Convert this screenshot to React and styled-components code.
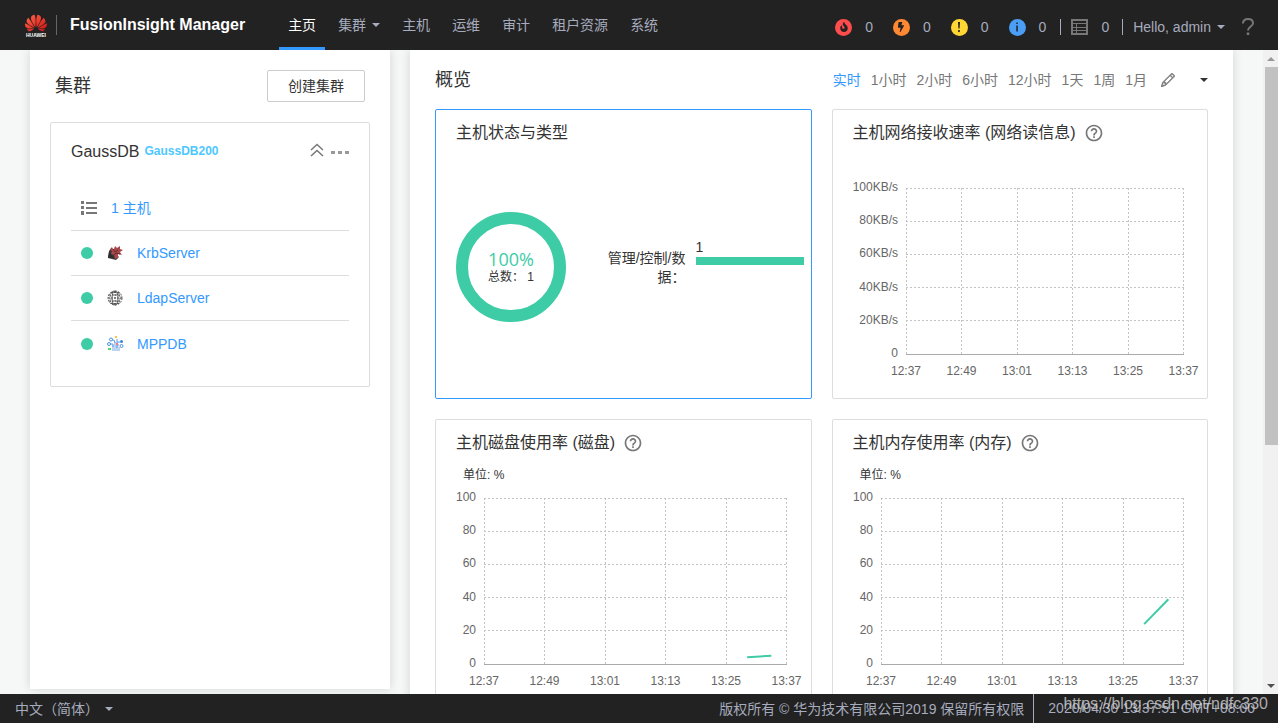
import React from 'react';
import styled, { createGlobalStyle } from 'styled-components';
import { SiHuawei } from 'react-icons/si';
import { FaFire, FaBolt } from 'react-icons/fa';
import { MdHelpOutline } from 'react-icons/md';
import { BsPencil } from 'react-icons/bs';

const GREEN = '#3dcca6';
const BLUE = '#3399ff';

const ExclamationIcon = ({ size }) => (
  <svg width={size} height={size} viewBox='0 0 10 10' fill='currentColor'>
    <path d='M4 0h2L5.600 6.500H4.400zM4.200 8h1.600v2H4.200z' />
  </svg>
);

const InfoIcon = ({ size }) => (
  <svg width={size} height={size} viewBox='0 0 10 10' fill='currentColor'>
    <path d='M4.300 0.500h1.500v1.500H4.300zM4.300 3.500h1.500v6H4.300z' />
  </svg>
);

const navItems = [
  { label: '主页', active: true },
  { label: '集群', menu: true },
  { label: '主机' },
  { label: '运维' },
  { label: '审计' },
  { label: '租户资源' },
  { label: '系统' },
];

const alarms = [
  { name: '紧急', color: '#ff4c4c', Icon: FaFire, count: 0 },
  { name: '重要', color: '#ff8833', Icon: FaBolt, count: 0 },
  { name: '次要', color: '#ffd633', Icon: ExclamationIcon, count: 0 },
  { name: '提示', color: '#4a9ef5', Icon: InfoIcon, count: 0 },
];

const ranges = ['实时', '1小时', '2小时', '6小时', '12小时', '1天', '1周', '1月'];
const times = ['12:37', '12:49', '13:01', '13:13', '13:25', '13:37'];
const PLOT_HEIGHT = 166;

const KrbIcon = () => (
  <svg width='16' height='16' viewBox='0 0 16 16'>
    <path d='M2 6L5 2l1 4 6 6-3 3-8-2z' fill='#3a3638' />
    <path
      d='M4 3l3 1 1-3 2 2 3-2v3l3 1-3 2 2 3-4-1v4l-3 1-1-4-3-1 1-3-2-1z'
      fill='#a8474a'
    />
    <path d='M6 4l2 3 3-2M7 10l2-2 4 1' stroke='#612c30' fill='none' />
    <path d='M1 13l1-6 5 6z' fill='#2d2d30' />
  </svg>
);

const LdapIcon = () => (
  <svg width='16' height='16' viewBox='0 0 16 16' fill='none' stroke='#555'>
    <circle cx='8' cy='8' r='7' strokeDasharray='2 1' />
    <ellipse cx='8' cy='8' rx='3' ry='7' />
    <path d='M8 1v14M1 8h14M2 5h12M2 11h12M4 2.5h8M4 13.5h8' strokeDasharray='2 1' />
    <path d='M5 2Q1 8 5 14M11 2q4 6 0 12' strokeDasharray='2 1' />
  </svg>
);

const MppdbIcon = () => (
  <svg width='17' height='16' viewBox='0 0 17 16' fill='none'>
    <path d='M6 15V9M8 15V6M10 15V9M12 15v-4' stroke='#a9c4ee' strokeWidth='1.5' />
    <path
      d='M3 8h3v3M5 4h2l1 3M10 7V3M10 6h3M12 9h-2v3'
      stroke='#5b9be8'
    />
    <circle cx='2' cy='8' r='1.5' stroke='#4a90e2' />
    <circle cx='4' cy='3.5' r='1.5' stroke='#4a90e2' />
    <circle cx='14.5' cy='5.5' r='1.5' fill='#3c82dc' />
    <circle cx='14.5' cy='10' r='1.5' stroke='#4a90e2' />
    <path d='M8 0h2v2H8z' fill='#f6c342' />
    <path d='M9 7h2v2H9z' fill='#f08080' />
    <path d='M1 12h3v2H1z' fill='#4cd964' />
  </svg>
);

const services = [
  { name: 'KrbServer', Icon: KrbIcon },
  { name: 'LdapServer', Icon: LdapIcon },
  { name: 'MPPDB', Icon: MppdbIcon },
];

const Logo = () => (
  <LogoMark>
    <svg width='22' height='18' viewBox='0 0 22 18'>
      <linearGradient id='petal' x1='0' y1='0' x2='1' y2='1'>
        <stop offset='0' stopColor='#ff6a50' />
        <stop offset='0.5' stopColor='#ee3a2c' />
        <stop offset='1' stopColor='#c4121a' />
      </linearGradient>
      <SiHuawei y='-2' size={22} fill='url(#petal)' />
    </svg>
    <svg width='22' height='5' viewBox='0 0 22 5'>
      <text x='11' y='5' textAnchor='middle' fontSize='5' fontWeight='700' fill='#fff'>
        HUAWEI
      </text>
    </svg>
  </LogoMark>
);

const Chart = ({ unit = '', gutter, series = [] }) => {
  const toY = (value) => PLOT_HEIGHT - (value / 100) * PLOT_HEIGHT;

  return (
    <PlotArea $gutter={gutter}>
      <Plot role='img' aria-label='趋势图'>
        {[0, 20, 40, 60, 80, 100].map((value) => (
          <g key={value}>
            <GridLine x1='0' x2='100%' y1={toY(value)} y2={toY(value)} />
            <text x='-8' y={toY(value) + 3} textAnchor='end'>
              {value === 0 ? value : `${value}${unit}`}
            </text>
          </g>
        ))}
        {times.map((time, i) => (
          <g key={time}>
            <GridLine x1={`${i * 20}%`} x2={`${i * 20}%`} y1='0' y2={PLOT_HEIGHT} />
            <text x={`${i * 20}%`} y={PLOT_HEIGHT + 21} textAnchor='middle'>
              {time}
            </text>
          </g>
        ))}
        <AxisLine x1='0' x2='100%' y1={PLOT_HEIGHT} y2={PLOT_HEIGHT} />
        {series.slice(1).map((point, i) => (
          <SeriesLine
            key={point.at}
            x1={`${series[i].at}%`}
            y1={toY(series[i].value)}
            x2={`${point.at}%`}
            y2={toY(point.value)}
          />
        ))}
      </Plot>
    </PlotArea>
  );
};

const ChartCard = ({ title, unitLabel, ...chart }) => (
  <Card>
    <CardTitle>
      {title}
      <IconButton type='button' aria-label='帮助'>
        <MdHelpOutline size={20} />
      </IconButton>
    </CardTitle>
    <UnitLabel>{unitLabel}</UnitLabel>
    <Chart {...chart} />
  </Card>
);

const HostCard = () => (
  <Card $selected>
    <CardTitle>主机状态与类型</CardTitle>
    <HostBody>
      <Donut>
        <DonutValue>100%</DonutValue>
        <DonutTotal>总数： 1</DonutTotal>
      </Donut>
      <BarGroup>
        <BarLabel>管理/控制/数据：</BarLabel>
        <BarValue>
          <span>1</span>
          <Bar />
        </BarValue>
      </BarGroup>
    </HostBody>
  </Card>
);

const App = () => (
  <>
    <GlobalStyle />
    <Page>
      <Header>
        <Logo />
        <Brand>FusionInsight Manager</Brand>
        <Nav>
          {navItems.map((item) => (
            <NavLink key={item.label} href='#' $active={item.active}>
              {item.label}
              {item.menu && <Caret />}
            </NavLink>
          ))}
        </Nav>
        <Status>
          <Alarms>
            {alarms.map(({ name, color, Icon, count }) => (
              <Counter key={name} href='#' aria-label={name}>
                <AlarmDot $color={color}>
                  <Icon size={10} />
                </AlarmDot>
                {count}
              </Counter>
            ))}
          </Alarms>
          <Divided>
            <Counter href='#'>
              <svg width='17' height='16' viewBox='0 0 17 16' fill='none' stroke='#777'>
                <path d='M1 1h15v14H1z' strokeWidth='2' />
                <path d='M5.5 4v11M1 4.5h15M1 8.5h15M1 11.5h15' />
              </svg>
              0
            </Counter>
          </Divided>
          <Divided>
            <UserButton type='button'>
              Hello, admin
              <Caret />
            </UserButton>
          </Divided>
          <HelpButton type='button' aria-label='帮助'>
            <svg width='12' height='18' viewBox='0 0 12 18' fill='none' stroke='#777'>
              <path
                d='M1 5.5C1 2.5 3 1 6 1s5 1.500 5 4.200C11 8.500 6 8.500 6 12.500'
                strokeWidth='2'
              />
              <path d='M6 14.500v2.500' strokeWidth='2.500' />
            </svg>
          </HelpButton>
        </Status>
      </Header>

      <Main>
        <Content>
          <SidePanel>
            <SideHeader>
              <Heading>集群</Heading>
              <CreateButton type='button'>创建集群</CreateButton>
            </SideHeader>
            <ClusterCard>
              <ClusterHeader>
                <ClusterName>GaussDB</ClusterName>
                <ClusterTag>GaussDB200</ClusterTag>
                <ClusterActions>
                  <IconButton type='button' aria-label='收起'>
                    <svg width='14' height='14' viewBox='0 0 14 14' fill='none' stroke='#777' strokeWidth='1.5'>
                      <path d='M1 7l6-5.500L13 7M1 13l6-5.500 6 5.500' />
                    </svg>
                  </IconButton>
                  <IconButton type='button' aria-label='更多'>
                    <svg width='18' height='14' viewBox='0 0 18 14' fill='#999'>
                      <path d='M0 8h4v3H0zM7 8h4v3H7zM14 8h4v3h-4z' />
                    </svg>
                  </IconButton>
                </ClusterActions>
              </ClusterHeader>
              <ServiceList>
                <HostRow>
                  <svg width='16' height='14' viewBox='0 0 16 14' fill='#777'>
                    <path d='M0 0h3v3H0zM0 5h3v3H0zM0 10h3v4H0zM5 1h11v2H5zM5 6h11v2H5zM5 11h11v2H5z' />
                  </svg>
                  <Link href='#'>1 主机</Link>
                </HostRow>
                {services.map(({ name, Icon }) => (
                  <ServiceRow key={name}>
                    <HealthDot />
                    <ServiceIcon>
                      <Icon />
                    </ServiceIcon>
                    <Link href='#'>{name}</Link>
                  </ServiceRow>
                ))}
              </ServiceList>
            </ClusterCard>
          </SidePanel>

          <OverviewPanel>
            <OverviewHeader>
              <Heading>概览</Heading>
              <Ranges>
                {ranges.map((range, i) => (
                  <RangeButton key={range} type='button' $active={i === 0}>
                    {range}
                  </RangeButton>
                ))}
              </Ranges>
              <IconButton type='button' aria-label='编辑'>
                <BsPencil size={14} strokeWidth={0.7} />
              </IconButton>
              <MenuButton type='button' aria-label='更多'>
                <Caret />
              </MenuButton>
            </OverviewHeader>
            <CardGrid>
              <HostCard />
              <ChartCard title='主机网络接收速率 (网络读信息)' unit='KB/s' gutter={53} />
              <ChartCard
                title='主机磁盘使用率 (磁盘)'
                unitLabel='单位: %'
                gutter={28}
                series={[
                  { at: 87, value: 4 },
                  { at: 95, value: 5 },
                ]}
              />
              <ChartCard
                title='主机内存使用率 (内存)'
                unitLabel='单位: %'
                gutter={28}
                series={[
                  { at: 87, value: 24 },
                  { at: 95, value: 39 },
                ]}
              />
            </CardGrid>
          </OverviewPanel>
        </Content>
        <ScrollTrack aria-hidden='true'>
          <ScrollArrow $up />
          <ScrollLane>
            <ScrollThumb />
          </ScrollLane>
          <ScrollArrow />
        </ScrollTrack>
      </Main>

      <Footer>
        <LanguageButton type='button'>
          中文（简体）
          <Caret />
        </LanguageButton>
        <Copyright>版权所有 © 华为技术有限公司2019 保留所有权限</Copyright>
        <ServerTime>2020/04/30 13:37:51 GMT+08:00</ServerTime>
        <Watermark>https://blog.csdn.net/ndfc330</Watermark>
      </Footer>
    </Page>
  </>
);

const GlobalStyle = createGlobalStyle`
  * {
    box-sizing: border-box;
  }

  body {
    margin: 0;
    color: #333;
    font-family: 'Liberation Sans', 'Noto Sans CJK SC', sans-serif;
    font-size: 14px;
    line-height: 20px;
  }

  button {
    padding: 0;
    border: none;
    background: none;
    color: inherit;
    font: inherit;
    cursor: pointer;
  }

  a {
    color: inherit;
    text-decoration: none;
  }

  svg {
    display: block;
    flex-shrink: 0;
  }
`;

const Page = styled.div`
  display: flex;
  flex-direction: column;
  height: 100vh;
  background-color: #f6f8f8;
`;

const Header = styled.header`
  display: flex;
  align-items: center;
  flex-shrink: 0;
  height: 50px;
  padding: 0 24px;
  background-color: #222;
  color: #a6abbd;
  white-space: nowrap;
`;

const LogoMark = styled.div`
  display: flex;
  flex-direction: column;
  align-items: center;
  width: 24px;
`;

const Brand = styled.div`
  margin-left: 8px;
  padding-left: 13px;
  border-left: 1px solid #666;
  color: #fff;
  font-size: 16px;
  font-weight: 700;
`;

const Nav = styled.nav`
  display: flex;
  gap: 4px;
  margin-left: 34px;
`;

const NavLink = styled.a`
  display: flex;
  align-items: center;
  gap: 6px;
  height: 50px;
  padding: 3px 9px 0;
  border-bottom: 3px solid ${(props) => (props.$active ? BLUE : 'transparent')};
  color: ${(props) => (props.$active ? '#fff' : 'inherit')};
`;

const Caret = styled.span`
  width: 0;
  height: 0;
  border: 4px solid transparent;
  border-top-color: currentColor;
  border-bottom: none;
`;

const Status = styled.div`
  display: flex;
  align-items: center;
  margin-left: auto;
  padding-top: 4px;
`;

const Alarms = styled.div`
  display: flex;
  gap: 20px;
  padding-right: 14px;
`;

const Counter = styled.a`
  display: flex;
  align-items: center;
  gap: 13px;
`;

const AlarmDot = styled.span`
  display: flex;
  align-items: center;
  justify-content: center;
  width: 17px;
  height: 17px;
  border-radius: 50%;
  background-color: ${(props) => props.$color};
  color: #222;
`;

const Divided = styled.div`
  display: flex;
  align-items: center;
  height: 16px;
  padding: 0 13px 0 10px;
  border-left: 1px solid #a6abbd;
`;

const UserButton = styled.button`
  display: flex;
  align-items: center;
  gap: 6px;
`;

const HelpButton = styled.button`
  margin-left: 4px;
`;

const Main = styled.main`
  display: flex;
  flex: 1;
  min-height: 0;
`;

const Content = styled.div`
  display: flex;
  flex: 1;
  gap: 20px;
  min-width: 0;
  padding: 0 30px;
  overflow: hidden;
`;

const Panel = styled.section`
  background-color: #fff;
  box-shadow: 0 0 10px rgba(0, 0, 0, 0.15);
`;

const SidePanel = styled(Panel)`
  flex: 0 0 360px;
  margin-bottom: 5px;
  padding: 20px;
`;

const SideHeader = styled.div`
  display: flex;
  align-items: center;
  justify-content: space-between;
  padding: 0 5px;
`;

const Heading = styled.h2`
  margin: 0;
  font-size: 18px;
  font-weight: 400;
  line-height: 24px;
`;

const CreateButton = styled.button`
  height: 32px;
  padding: 0 20px;
  border: 1px solid #ccc;
  border-radius: 2px;
`;

const ClusterCard = styled.div`
  margin-top: 20px;
  padding: 18px 20px 20px;
  border: 1px solid #ddd;
  border-radius: 2px;
`;

const ClusterHeader = styled.div`
  display: flex;
  align-items: flex-start;
  height: 24px;
`;

const ClusterName = styled.span`
  font-size: 16px;
  line-height: 22px;
`;

const ClusterTag = styled.span`
  margin-left: 5px;
  color: #4cc8ff;
  font-size: 12px;
  font-weight: 700;
`;

const ClusterActions = styled.div`
  display: flex;
  gap: 7px;
  margin-left: auto;
  padding-top: 2px;
`;

const IconButton = styled.button`
  color: #777;
`;

const ServiceList = styled.ul`
  margin: 21px 0 0;
  padding: 0;
  list-style: none;
`;

const ServiceRow = styled.li`
  display: flex;
  align-items: center;
  height: 45px;
  padding-left: 10px;

  &:not(:last-child) {
    border-bottom: 1px solid #ddd;
  }
`;

const HostRow = styled(ServiceRow)`
  gap: 14px;
`;

const HealthDot = styled.span`
  width: 12px;
  height: 12px;
  border-radius: 50%;
  background-color: ${GREEN};
`;

const ServiceIcon = styled.span`
  width: 30px;
  margin-left: 14px;
`;

const Link = styled.a`
  color: ${BLUE};
`;

const OverviewPanel = styled(Panel)`
  flex: 1;
  align-self: flex-start;
  min-width: 0;
  padding: 0 25px 25px;
`;

const OverviewHeader = styled.div`
  display: flex;
  align-items: center;
  height: 59px;
`;

const Ranges = styled.div`
  display: flex;
  gap: 10px;
  margin: 0 14px 0 auto;
`;

const RangeButton = styled.button`
  color: ${(props) => (props.$active ? BLUE : '#777')};
`;

const MenuButton = styled.button`
  display: flex;
  margin-left: 25px;
`;

const CardGrid = styled.div`
  display: grid;
  grid-template-columns: repeat(2, minmax(0, 1fr));
  gap: 20px;
`;

const Card = styled.article`
  display: flex;
  flex-direction: column;
  min-height: 290px;
  padding: 12px 20px;
  border: 1px solid ${(props) => (props.$selected ? BLUE : '#ddd')};
  border-radius: 2px;
`;

const CardTitle = styled.h3`
  display: flex;
  align-items: center;
  gap: 8px;
  margin: 0;
  font-size: 16px;
  font-weight: 400;
  line-height: 22px;
`;

const UnitLabel = styled.div`
  height: 18px;
  margin: 12px 0 14px 7px;
  font-size: 12px;
  line-height: 18px;
`;

const PlotArea = styled.div`
  padding: 0 4px 24px ${(props) => props.$gutter}px;
`;

const Plot = styled.svg`
  width: 100%;
  height: 167px;
  overflow: visible;
  fill: #666;
  font-size: 12px;
`;

const GridLine = styled.line`
  stroke: #c4c4c4;
  stroke-dasharray: 2 2;
  shape-rendering: crispEdges;
`;

const AxisLine = styled.line`
  stroke: #aaa;
  shape-rendering: crispEdges;
`;

const SeriesLine = styled.line`
  stroke: ${GREEN};
  stroke-width: 2;
`;

const HostBody = styled.div`
  display: flex;
  flex: 1;
  align-items: center;
  justify-content: space-between;
  padding-top: 4px;
`;

const Donut = styled.div`
  display: flex;
  flex-direction: column;
  align-items: center;
  justify-content: center;
  width: 110px;
  height: 110px;
  border: 12px solid ${GREEN};
  border-radius: 50%;
`;

const DonutValue = styled.span`
  color: ${GREEN};
  font-family: 'Open Sans', sans-serif;
  font-size: 18px;
`;

const DonutTotal = styled.span`
  font-size: 12px;
  line-height: 16px;
`;

const BarGroup = styled.div`
  display: flex;
  gap: 10px;
  margin-right: -13px;
  padding-bottom: 10px;
`;

const BarLabel = styled.span`
  width: 80px;
  padding-top: 12px;
  line-height: 19px;
  text-align: right;
`;

const BarValue = styled.div`
  width: 108px;
`;

const Bar = styled.div`
  height: 8px;
  background-color: ${GREEN};
`;

const ScrollTrack = styled.div`
  display: flex;
  flex-direction: column;
  flex: 0 0 15px;
  background-color: #f1f1f1;
`;

const ScrollArrow = styled.span`
  display: flex;
  align-items: center;
  justify-content: center;
  height: 17px;
  color: ${(props) => (props.$up ? '#999' : '#505050')};

  &::after {
    content: '';
    border: 4px solid transparent;
    border-${(props) => (props.$up ? 'bottom' : 'top')}-color: currentColor;
    border-${(props) => (props.$up ? 'top' : 'bottom')}: none;
  }
`;

const ScrollLane = styled.div`
  flex: 1;
  padding-left: 2px;
`;

const ScrollThumb = styled.div`
  height: 62%;
  background-color: #c1c1c1;
`;

const Footer = styled.footer`
  position: relative;
  display: flex;
  align-items: center;
  flex-shrink: 0;
  height: 29px;
  padding: 0 23px 0 15px;
  background-color: #222;
  color: #a6abbd;
  white-space: nowrap;
`;

const LanguageButton = styled.button`
  display: flex;
  align-items: center;
  gap: 6px;
`;

const Copyright = styled.span`
  margin-left: auto;
  padding-right: 9px;
`;

const ServerTime = styled.time`
  padding-left: 14px;
  border-left: 1px solid #a6abbd;
  line-height: 29px;
`;

const Watermark = styled.span`
  position: absolute;
  top: 0;
  right: 10px;
  color: rgba(210, 210, 210, 0.8);
  font-size: 16px;
`;

export default App;
